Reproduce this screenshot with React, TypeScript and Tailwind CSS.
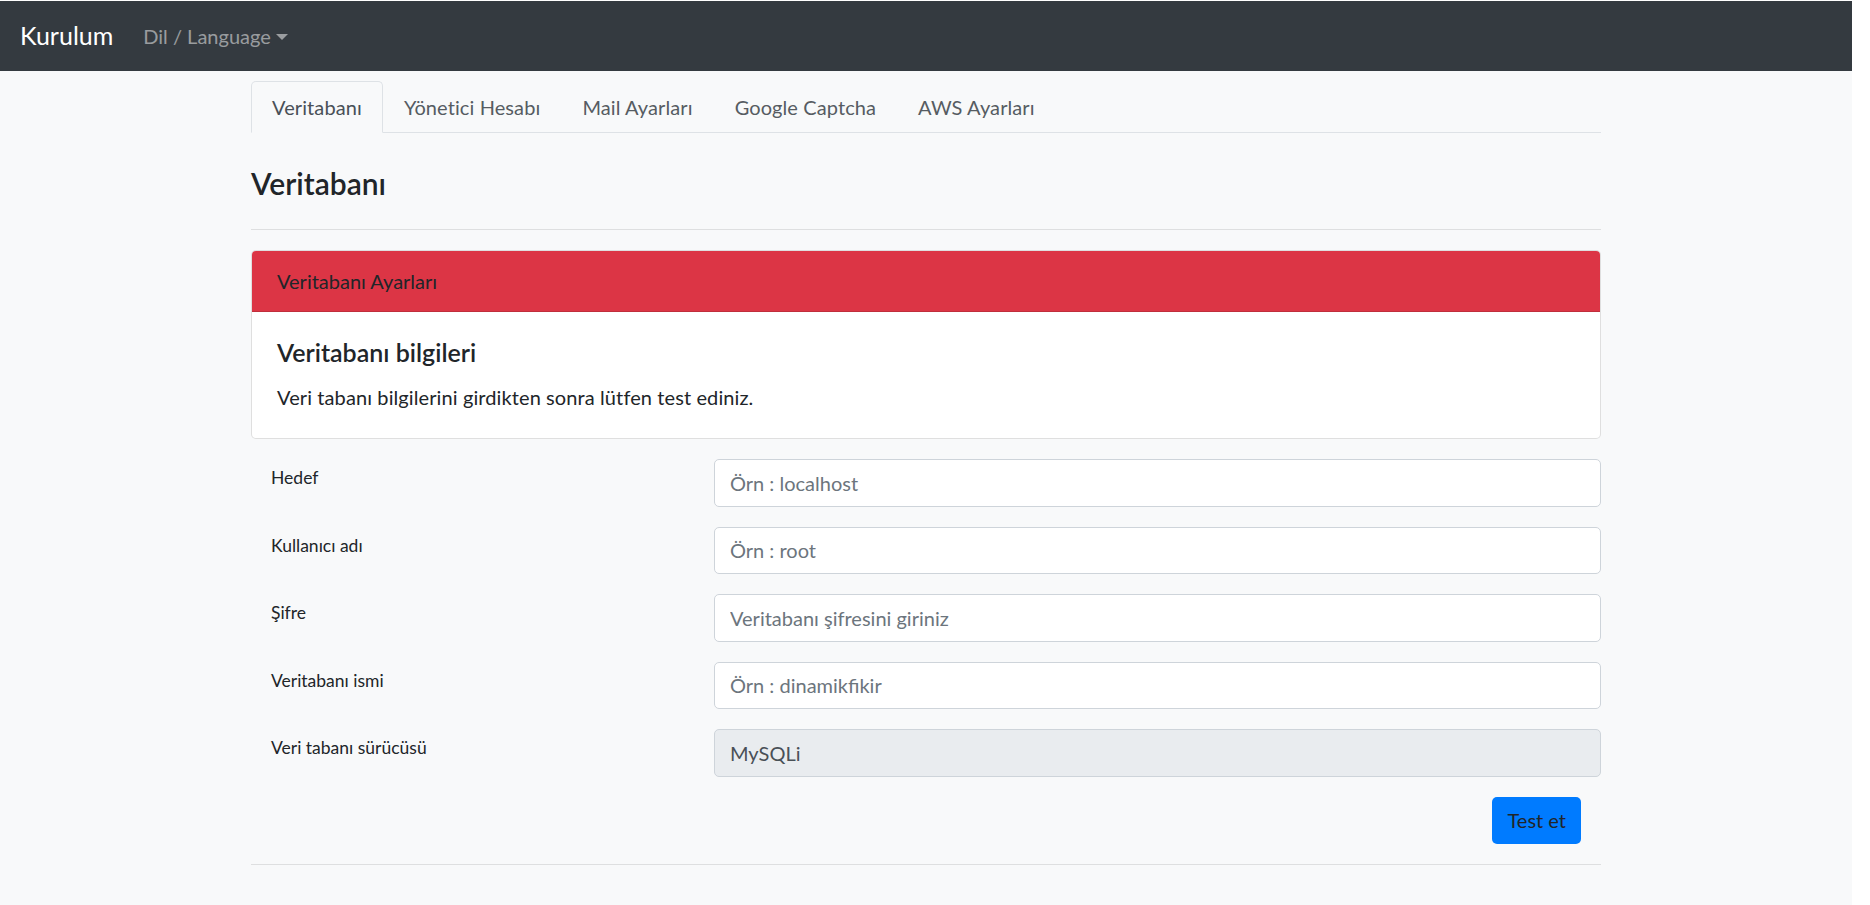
import React from 'react';

const tabs = ['Veritabanı', 'Yönetici Hesabı', 'Mail Ayarları', 'Google Captcha', 'AWS Ayarları'];

const fields: Array<{ label: string; placeholder?: string; value?: string }> = [
  { label: 'Hedef', placeholder: 'Örn : localhost' },
  { label: 'Kullanıcı adı', placeholder: 'Örn : root' },
  { label: 'Şifre', placeholder: 'Veritabanı şifresini giriniz' },
  { label: 'Veritabanı ismi', placeholder: 'Örn : dinamikfikir' },
  { label: 'Veri tabanı sürücüsü', value: 'MySQLi' },
];

export default function App() {
  return (
    <div className="min-h-[905px] bg-white font-['Lato','Noto_Sans',sans-serif] text-[#212529]">
      <div className="w-[1852px] min-h-[904px] mt-px bg-[#f8f9fa]">
        <nav className="h-[70px] bg-[#343a40] flex items-center px-5">
          <span className="text-[25px] leading-[1.5] text-white mr-5">Kurulum</span>
          <span className="flex items-center px-2.5 text-[20px] leading-[30px] text-white/50">
            Dil / Language
            <span className="ml-[5px] mt-[2px] w-0 h-0 border-t-[6px] border-t-white/50 border-x-[6px] border-x-transparent" />
          </span>
        </nav>

        <div className="w-[1350px] mx-auto">
          <div className="flex mt-[10px] border-b border-[#dee2e6]">
            {tabs.map((t, i) => (
              <div
                key={t}
                className={
                  i === 0
                    ? '-mb-px px-5 py-2.5 text-[20px] leading-[30px] tracking-[0.1px] border border-[#dee2e6] border-b-[#f8f9fa] rounded-t-[5px] bg-[#f8f9fa] text-[#495057]'
                    : '-mb-px px-5 py-2.5 text-[20px] leading-[30px] tracking-[0.1px] border border-transparent text-[#565c62]'
                }
              >
                {t}
              </div>
            ))}
          </div>

          <h4 className="mt-[32px] text-[30px] leading-[36px] font-semibold">Veritabanı</h4>
          <hr className="mt-[28px] mb-5 border-0 border-t border-black/10" />

          <div className="border border-black/[0.125] rounded-[5px] bg-white overflow-hidden">
            <div className="bg-[#dc3545] px-[25px] py-[15px] text-[20px] leading-[30px] border-b border-black/[0.125]">
              Veritabanı Ayarları
            </div>
            <div className="px-[25px] pt-[25px] pb-[26px]">
              <h5 className="text-[25px] leading-[30px] font-semibold mb-[15px]">Veritabanı bilgileri</h5>
              <p className="text-[20px] leading-[30px] tracking-[0.1px]">Veri tabanı bilgilerini girdikten sonra lütfen test ediniz.</p>
            </div>
          </div>

          <div className="mt-5 flex flex-col gap-5">
            {fields.map((f) => (
              <div key={f.label} className="flex">
                <label className="w-[463px] pl-5 pt-[6px] text-[17.5px] leading-[26px]">{f.label}</label>
                {f.value ? (
                  <div className="flex-1 h-[47.5px] flex items-center px-[15px] border border-[#ced4da] rounded-[5px] bg-[#e9ecef] text-[20px] text-[#495057]">
                    {f.value}
                  </div>
                ) : (
                  <input
                    type="text"
                    placeholder={f.placeholder}
                    className="flex-1 h-[47.5px] px-[15px] border border-[#ced4da] rounded-[5px] bg-white text-[20px] text-[#495057] outline-none placeholder:text-[#6c757d]"
                  />
                )}
              </div>
            ))}
            <div className="flex justify-end pr-5">
              <button className="h-[47px] px-[15px] rounded-[5px] bg-[#007bff] text-[20px] leading-[30px] text-[#212529]">
                Test et
              </button>
            </div>
          </div>

          <hr className="mt-5 border-0 border-t border-black/10" />
        </div>
      </div>
    </div>
  );
}
